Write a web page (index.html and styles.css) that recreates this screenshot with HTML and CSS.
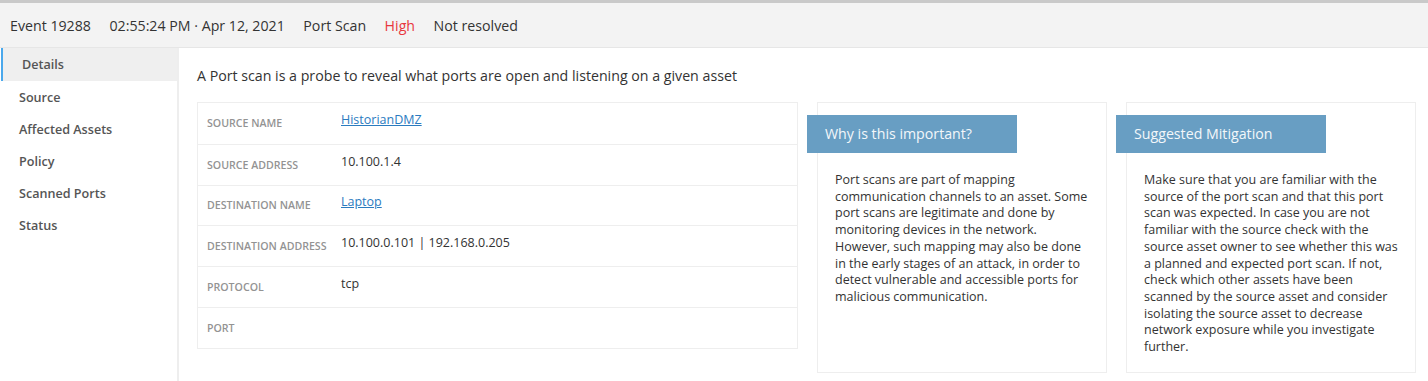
FILE: index.html
```html
<!DOCTYPE html>
<html>
<head>
<meta charset="utf-8">
<link rel="stylesheet" href="styles.css">
</head>
<body>
<div class="topline"></div>
<header class="header">
  <span>Event 19288</span>
  <span>02:55:24 PM · Apr 12, 2021</span>
  <span>Port Scan</span>
  <span class="high">High</span>
  <span>Not resolved</span>
</header>
<div class="main">
  <nav class="sidebar">
    <div class="nav-item active">Details</div>
    <div class="nav-item">Source</div>
    <div class="nav-item">Affected Assets</div>
    <div class="nav-item">Policy</div>
    <div class="nav-item">Scanned Ports</div>
    <div class="nav-item">Status</div>
  </nav>
  <section class="content">
    <p class="desc">A Port scan is a probe to reveal what ports are open and listening on a given asset</p>
    <div class="row">
      <div class="table">
        <div class="tr"><div class="label">Source Name</div><div class="value"><a href="#">HistorianDMZ</a></div></div>
        <div class="tr"><div class="label">Source Address</div><div class="value">10.100.1.4</div></div>
        <div class="tr"><div class="label">Destination Name</div><div class="value"><a href="#">Laptop</a></div></div>
        <div class="tr"><div class="label">Destination Address</div><div class="value">10.100.0.101 | 192.168.0.205</div></div>
        <div class="tr"><div class="label">Protocol</div><div class="value">tcp</div></div>
        <div class="tr"><div class="label">Port</div><div class="value"></div></div>
      </div>
      <div class="card">
        <div class="tab">Why is this important?</div>
        <p class="card-body">Port scans are part of mapping communication channels to an asset. Some port scans are legitimate and done by monitoring devices in the network. However, such mapping may also be done in the early stages of an attack, in order to detect vulnerable and accessible ports for malicious communication.</p>
      </div>
      <div class="card">
        <div class="tab">Suggested Mitigation</div>
        <p class="card-body">Make sure that you are familiar with the source of the port scan and that this port scan was expected. In case you are not familiar with the source check with the source asset owner to see whether this was a planned and expected port scan. If not, check which other assets have been scanned by the source asset and consider isolating the source asset to decrease network exposure while you investigate further.</p>
      </div>
    </div>
  </section>
</div>
</body>
</html>
```
FILE: styles.css
```css
* { box-sizing: border-box; }
html, body { margin: 0; padding: 0; background: #fff; }
body {
  font-family: "Open Sans", "Liberation Sans", sans-serif;
  color: #333;
  width: 1428px;
  height: 381px;
  overflow: hidden;
}
.topline { height: 3px; background: #c9c9c9; }
.header {
  height: 45px;
  background: #f3f3f3;
  border-bottom: 1px solid #e6e6e6;
  display: flex;
  align-items: center;
  gap: 18.5px;
  padding: 1px 0 0 10px;
  font-size: 14.2px;
  color: #333;
}
.high { color: #e8373d; }
.main { display: flex; height: 333px; }
.sidebar {
  width: 179px;
  flex: none;
  border-right: 2px solid #eeeeee;
}
.nav-item {
  height: 32px;
  display: flex;
  align-items: center;
  padding-left: 19px;
  font-size: 12.6px;
  font-weight: 600;
  color: #555;
}
.nav-item.active {
  background: #efefef;
  border-left: 2px solid #4aa8ec;
  margin-left: 1px;
  padding-left: 19px;
  height: 33px;
  padding-bottom: 1px;
}
.content {
  flex: 1;
  padding: 19px 12px 0 18px;
}
.desc {
  margin: 0 0 17px 0;
  font-size: 14.2px;
  line-height: 18px;
  color: #333;
}
.row {
  display: flex;
  gap: 19px;
  align-items: stretch;
}
.table {
  width: 601px;
  flex: none;
  align-self: flex-start;
  border: 1px solid #eeeeee;
}
.tr {
  display: flex;
  align-items: center;
  height: 40.8px;
  border-top: 1px solid #eeeeee;
}
.tr:first-child { border-top: none; }
.label {
  width: 143px;
  flex: none;
  padding-left: 9px;
  font-size: 10.6px;
  font-weight: 600;
  text-transform: uppercase;
  color: #939393;
}
.value {
  font-size: 12.5px;
  color: #333;
  padding-bottom: 7px;
}
.value a { color: #2b7bbf; text-decoration: underline; }
.card {
  width: 290px;
  flex: none;
  height: 271px;
  border: 1px solid #eeeeee;
  padding-top: 12px;
}
.tab {
  margin-left: -11px;
  width: 210px;
  height: 38px;
  background: #689ec3;
  color: #f3f7fa;
  font-size: 14.2px;
  display: flex;
  align-items: center;
  padding-left: 18px;
  padding-bottom: 1px;
}
.card-body {
  margin: 19px 0 0 0;
  padding: 0 12px 0 17px;
  font-size: 12.5px;
  line-height: 16.7px;
  color: #333;
}
```
